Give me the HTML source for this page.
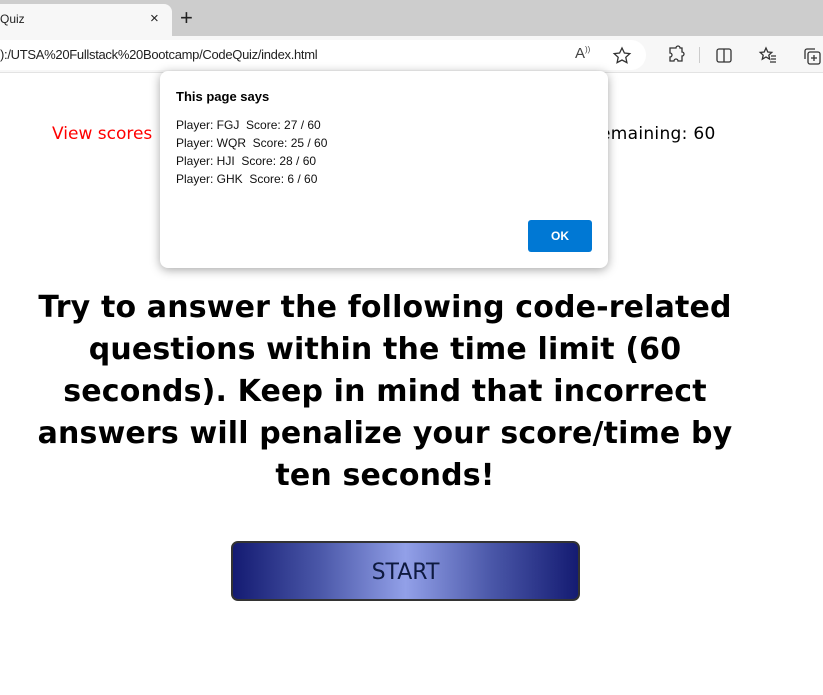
<!DOCTYPE html>
<html><head><style>
*{margin:0;padding:0;box-sizing:border-box}
body{width:823px;height:695px;overflow:hidden;background:#fff;font-family:"DejaVu Sans","Liberation Sans",sans-serif;position:relative}
.tabbar{position:absolute;left:0;top:0;width:823px;height:36px;background:#cdcdcd}
.tab{position:absolute;left:0;top:4px;width:172px;height:32px;background:#f7f7f7;border-radius:0 8px 0 0}
.tb{position:absolute;left:0;top:36px;width:823px;height:37px;background:#f7f7f7;border-bottom:1px solid #e3e3e3}
.pill{position:absolute;left:-20px;top:4px;width:666px;height:30px;background:#fff;border-radius:15px}
.t{position:absolute;font-family:"Liberation Sans",sans-serif;font-size:13px;color:#222}
.ico{position:absolute;stroke:#333;fill:none;stroke-width:1.3}
.dlg{position:absolute;left:160px;top:71px;width:448px;height:197px;background:#fff;border-radius:8px;box-shadow:0 2px 10px rgba(0,0,0,.35)}
.dlg h4{position:absolute;left:16px;top:18px;font-family:"Liberation Sans",sans-serif;font-size:13px;font-weight:bold;color:#000}
.dlg .m{position:absolute;left:16px;top:45px;font-family:"Liberation Sans",sans-serif;font-size:12px;line-height:18px;color:#111}
.ok{position:absolute;left:368px;top:149px;width:64px;height:32px;background:#0078d4;border-radius:3px;color:#fff;font-family:"Liberation Sans",sans-serif;font-weight:bold;font-size:12px;text-align:center;line-height:32px}
.view{position:absolute;left:52px;top:124px;color:#f00;font-size:17px}
.rem{position:absolute;left:600px;top:124px;color:#000;font-size:17px;letter-spacing:0.3px}
h1{position:absolute;left:0;top:287px;width:770px;text-align:center;font-size:30px;line-height:42px;font-weight:bold;color:#000;letter-spacing:0.15px}
.btn{position:absolute;left:231px;top:541px;width:349px;height:60px;border:2px solid #333;border-radius:7px;background:linear-gradient(90deg,#141b72 0%,#4a57a8 25%,#92a0e8 50%,#4a57a8 75%,#141b72 100%);color:#0e1a40;font-size:22px;text-align:center;line-height:60px}
</style></head><body>
<div class="tabbar"><div class="tab"></div>
<div class="t" style="left:0;top:12px;font-size:12px">Quiz</div>
<div class="t" style="left:150px;top:10px;font-size:15px">×</div>
<div class="t" style="left:180px;top:5px;font-size:22px;font-weight:300">+</div>
</div>
<div class="tb"><div class="pill"></div>
<div class="t" style="left:0;top:11px;font-size:13px;letter-spacing:-0.3px">):/UTSA%20Fullstack%20Bootcamp/CodeQuiz/index.html</div>
<div class="t" style="left:575px;top:9px;font-size:15px;color:#444">A<sup style="font-size:8px">))</sup></div>
<svg class="ico" style="left:612px;top:10px" width="20" height="20" viewBox="0 0 20 20"><path d="M10 2l2.4 5 5.4.6-4 3.7 1.1 5.3L10 14l-4.9 2.6 1.1-5.3-4-3.7 5.4-.6z"/></svg>
<svg class="ico" style="left:666px;top:9px" width="20" height="20" viewBox="0 0 20 20"><path d="M7 3h3a2 2 0 014 0v0h2v4a2 2 0 010 4v5h-4a2 2 0 00-4 0H4v-4a2 2 0 000-4V3z"/></svg>
<div style="position:absolute;left:699px;top:11px;width:1px;height:16px;background:#ccc"></div>
<svg class="ico" style="left:714px;top:10px" width="20" height="20" viewBox="0 0 20 20"><rect x="3" y="3" width="14" height="13" rx="2"/><path d="M10 3v13"/></svg>
<svg class="ico" style="left:758px;top:10px" width="20" height="20" viewBox="0 0 20 20"><path d="M8 2l1.8 4 4 .4-3 2.8.9 4L8 11l-3.7 2.2.9-4-3-2.8 4-.4zM13 10h5M13 13h5M12 16h6"/></svg>
<svg class="ico" style="left:802px;top:10px" width="20" height="20" viewBox="0 0 20 20"><rect x="6" y="6" width="12" height="12" rx="2"/><path d="M3 13V5a2 2 0 012-2h8M12 9v6M9 12h6"/></svg>
</div>
<div class="view">View scores</div>
<div class="rem">emaining: 60</div>
<h1>Try to answer the following code-related<br>questions within the time limit (60<br>seconds). Keep in mind that incorrect<br>answers will penalize your score/time by<br>ten seconds!</h1>
<div class="btn">START</div>
<div class="dlg"><h4>This page says</h4>
<div class="m">Player: FGJ&nbsp; Score: 27 / 60<br>Player: WQR&nbsp; Score: 25 / 60<br>Player: HJI&nbsp; Score: 28 / 60<br>Player: GHK&nbsp; Score: 6 / 60</div>
<div class="ok">OK</div></div>
</body></html>
